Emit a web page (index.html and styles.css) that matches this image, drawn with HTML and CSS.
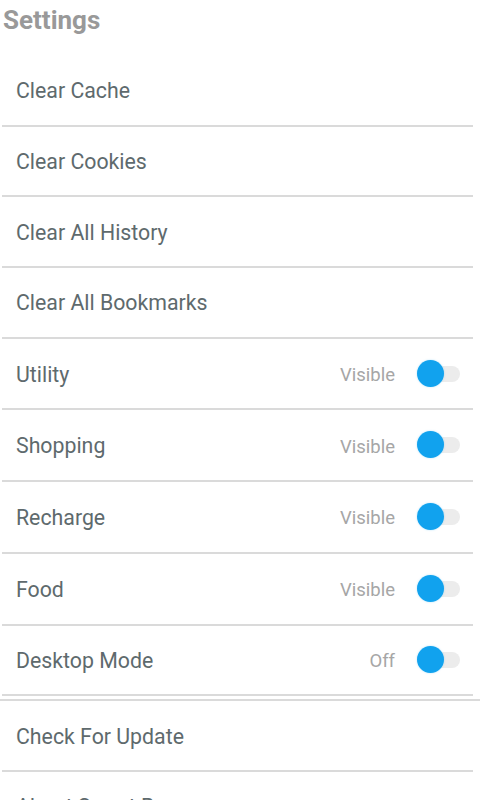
FILE: index.html
```html
<!DOCTYPE html>
<html>
<head>
<meta charset="utf-8">
<link rel="stylesheet" href="styles.css">
</head>
<body>
<div class="screen">
  <h1 class="title">Settings</h1>
  <div class="list">
    <div class="row"><span class="label">Clear Cache</span></div>
    <div class="row"><span class="label">Clear Cookies</span></div>
    <div class="row"><span class="label">Clear All History</span></div>
    <div class="row"><span class="label">Clear All Bookmarks</span></div>
    <div class="row tall"><span class="label">Utility</span><span class="state">Visible</span><span class="toggle"><span class="knob"></span></span></div>
    <div class="row tall"><span class="label">Shopping</span><span class="state">Visible</span><span class="toggle"><span class="knob"></span></span></div>
    <div class="row tall"><span class="label">Recharge</span><span class="state">Visible</span><span class="toggle"><span class="knob"></span></span></div>
    <div class="row tall"><span class="label">Food</span><span class="state">Visible</span><span class="toggle"><span class="knob"></span></span></div>
    <div class="row"><span class="label">Desktop Mode</span><span class="state">Off</span><span class="toggle"><span class="knob"></span></span></div>
    <div class="split"></div>
    <div class="row"><span class="label">Check For Update</span></div>
    <div class="row"><span class="label">About Smart Browser</span></div>
  </div>
</div>
</body>
</html>
```
FILE: styles.css
```css
html, body {
  margin: 0;
  padding: 0;
  background: #ffffff;
}
body {
  font-family: Roboto, "Liberation Sans", sans-serif;
  width: 480px;
  height: 800px;
  overflow: hidden;
}
.title {
  margin: 0;
  padding: 5px 0 0 3px;
  height: 51px;
  font-size: 26px;
  line-height: 30px;
  font-weight: 700;
  color: #999999;
}
.list {
  display: flex;
  flex-direction: column;
}
.row {
  display: flex;
  align-items: center;
  height: 68.7px;
  margin: 0 7px 0 2px;
  padding: 0 13px 0 14px;
  border-bottom: 2px solid #dadada;
}
.row.tall {
  height: 69.7px;
}
.label {
  flex: 1;
  font-size: 21.3px;
  color: #5e6a6d;
  padding-top: 1px;
}
.state {
  font-size: 18.5px;
  color: #a6a6a6;
  margin-right: 23px;
  padding-top: 3px;
}
.toggle {
  position: relative;
  width: 42px;
  height: 16px;
  border-radius: 8px;
  background: #ececec;
}
.knob {
  position: absolute;
  left: -1px;
  top: -6px;
  width: 27px;
  height: 27px;
  border-radius: 50%;
  background: #11a2ee;
  box-shadow: 0 0 2px rgba(17, 162, 238, 0.35);
}
.split {
  height: 3px;
  border-bottom: 2px solid #dadada;
}
```
